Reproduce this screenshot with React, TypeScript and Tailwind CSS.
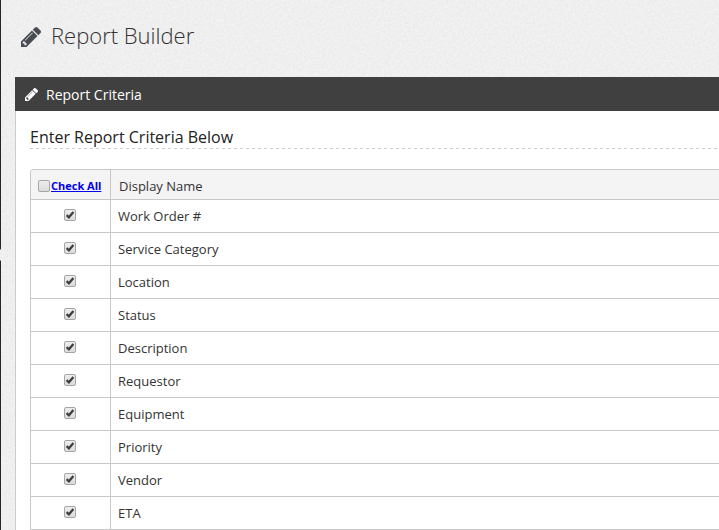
import { useState } from "react";

const FIELDS = [
  "Work Order #",
  "Service Category",
  "Location",
  "Status",
  "Description",
  "Requestor",
  "Equipment",
  "Priority",
  "Vendor",
  "ETA",
];

function Pencil({ className }: { className: string }) {
  return (
    <svg viewBox="0 -1387 1515 1515" fill="currentColor" className={className} aria-hidden="true">
      <path
        transform="scale(1,-1)"
        d="M363 0l91 91-235 235-91-91v-107h128v-128h107zM886 928q0 22-22 22-10 0-17-7l-542-542q-7-7-7-17 0-22 22-22 10 0 17 7l542 542q7 7 7 17zM832 1120l416-416-832-832h-416v416zM1515 1024q0-53-37-90l-166-166-416 416 166 165q36 38 90 38 53 0 91-38l235-234q37-39 37-91z"
      />
    </svg>
  );
}

function Grain() {
  return (
    <svg className="pointer-events-none absolute inset-0 h-full w-full" aria-hidden="true">
      <filter id="grain" colorInterpolationFilters="sRGB">
        <feTurbulence type="fractalNoise" baseFrequency="0.45" numOctaves="2" stitchTiles="stitch" />
        <feColorMatrix values="0.06 0 0 0 0.907  0.06 0 0 0 0.907  0.06 0 0 0 0.907  0 0 0 0 1" />
      </filter>
      <rect width="100%" height="100%" filter="url(#grain)" />
    </svg>
  );
}

function CheckBox({
  id,
  checked,
  onChange,
}: {
  id: string;
  checked: boolean;
  onChange: (value: boolean) => void;
}) {
  return (
    <span className="inline-grid size-3 place-items-center">
      <input
        id={id}
        type="checkbox"
        checked={checked}
        onChange={(e) => onChange(e.target.checked)}
        className="peer col-start-1 row-start-1 size-3 appearance-none rounded-xs border border-[#a5a5a5] bg-linear-to-b from-[#ededed] to-[#dcdcdc]"
      />
      <svg
        viewBox="0 0 12 12"
        className="pointer-events-none invisible col-start-1 row-start-1 size-3 fill-none stroke-[#3f3f3f] peer-checked:visible"
        aria-hidden="true"
      >
        <path d="M2.6 6.2 4.9 8.3 9.4 3" strokeWidth="2.3" />
      </svg>
    </span>
  );
}

export default function App() {
  const [selected, setSelected] = useState<boolean[]>(FIELDS.map(() => true));
  const [all, setAll] = useState(false);

  const toggleAll = (value: boolean) => {
    setAll(value);
    setSelected(FIELDS.map(() => value));
  };

  return (
    <div className="relative flex h-screen overflow-hidden bg-[#efefef] font-['Open_Sans','Noto_Sans',sans-serif] text-[#333]">
      <Grain />
      <div className="relative flex w-px shrink-0 flex-col">
        <div className="h-[249px] bg-[#2b2525]" />
        <div className="h-3 border-y border-[#999] bg-[#efefef]" />
        <div className="flex-1 bg-[#2b2525]" />
      </div>

      <main className="relative min-w-0 flex-1 pl-3.5">
        <header className="flex h-[77px] items-center gap-2.5 pb-1 pl-1.5">
          <Pencil className="size-5 text-[#484b52]" />
          <h1 className="pb-0.5 text-[22px] font-light">Report Builder</h1>
        </header>

        <section>
          <div className="flex h-[34px] items-center gap-2 bg-[#404040] pl-2.5 text-white">
            <Pencil className="size-3.25" />
            <h2 className="pt-0.5 text-sm">Report Criteria</h2>
          </div>

          <div className="border-l border-[#ccc] bg-white pt-3.5 pl-3.5">
            <h3 className="text-base leading-6 text-[#222]">Enter Report Criteria Below</h3>
            <div className="-mt-px h-px bg-[repeating-linear-gradient(to_right,#ccc_0_3px,transparent_3px_6px)]" />

            <div className="mt-5 overflow-hidden rounded-tl border-t border-l border-[#c8c8c8]">
              <table className="w-full border-separate border-spacing-0 text-left text-[13px]">
                <thead>
                  <tr className="h-[30px] bg-[#f4f4f4]">
                    <th className="w-20 border-r border-b border-[#c8c8c8] p-0 pl-[7px] font-normal">
                      <div className="flex items-center pt-0.5">
                        <CheckBox id="check-all" checked={all} onChange={toggleAll} />
                        <label htmlFor="check-all" className="pl-px text-[11px] leading-4 font-bold whitespace-nowrap text-[#0000ee] underline">
                          Check All
                        </label>
                      </div>
                    </th>
                    <th className="border-b border-[#c8c8c8] p-0 pt-1 pl-2 font-normal">Display Name</th>
                  </tr>
                </thead>
                <tbody>
                  {FIELDS.map((field, i) => (
                    <tr key={field} className="h-[33px] bg-white">
                      <td className="border-r border-b border-[#c8c8c8] p-0">
                        <div className="flex justify-center pr-0.5 pb-0.5">
                          <CheckBox
                            id={`field-${i}`}
                            checked={selected[i]}
                            onChange={(value) => setSelected(selected.map((s, j) => (j === i ? value : s)))}
                          />
                        </div>
                      </td>
                      <td className="border-b border-[#c8c8c8] p-0 pt-0.5 pl-[7px]">
                        <label htmlFor={`field-${i}`}>{field}</label>
                      </td>
                    </tr>
                  ))}
                </tbody>
              </table>
            </div>
          </div>
        </section>
      </main>
    </div>
  );
}
